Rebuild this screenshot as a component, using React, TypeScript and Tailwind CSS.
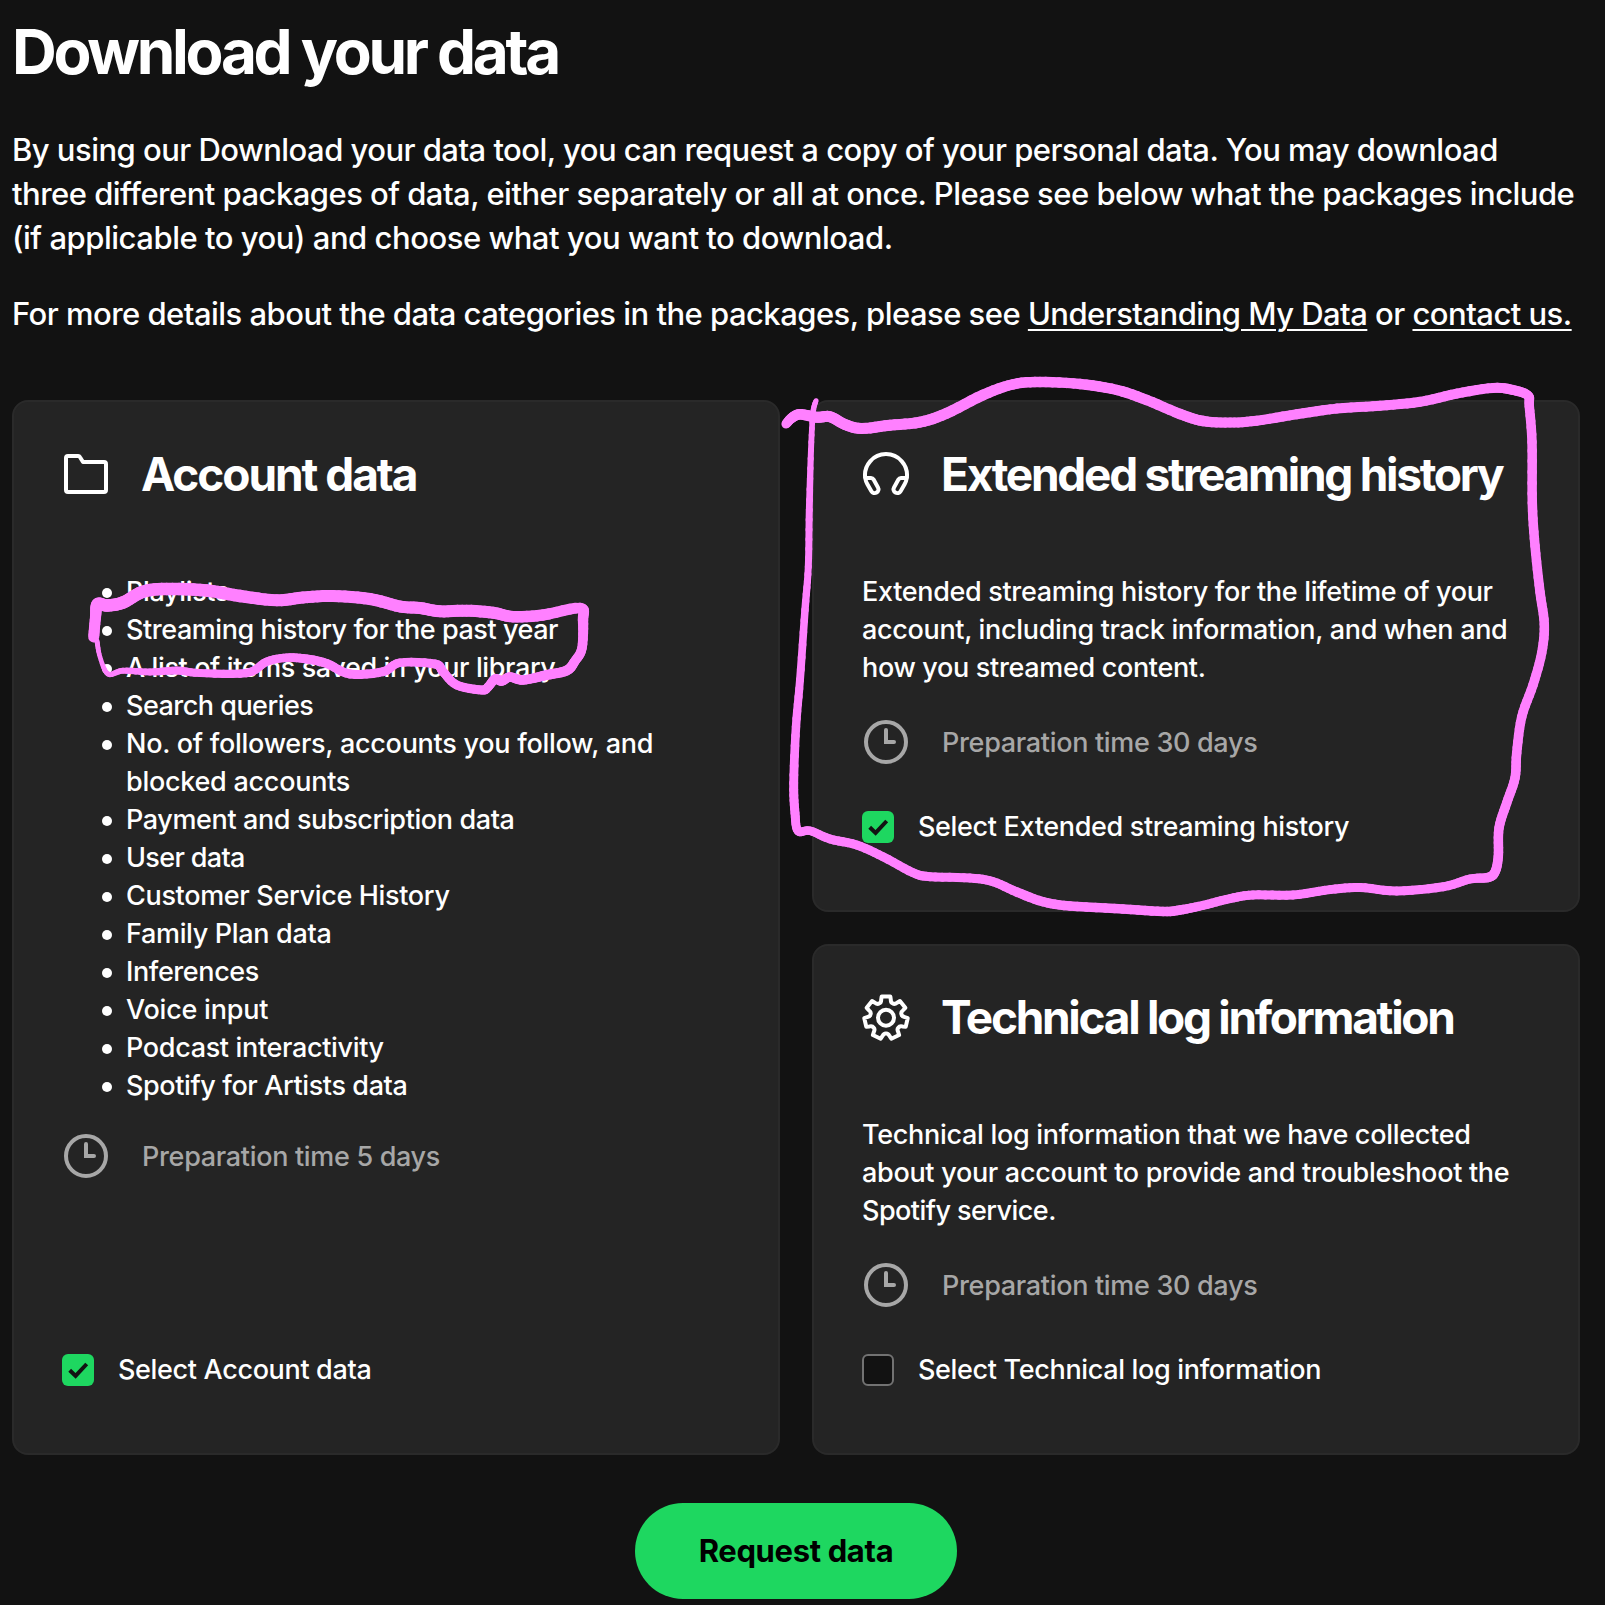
import type { ReactNode } from "react";

type Point = [number, number, number];

/* Freehand marker strokes: x, y, thickness */
const bigLoop: Point[] = [
  [786, 424, 9], [791.7, 418, 10], [800, 414.3, 10.5], [816.7, 417.3, 11], [830, 416.7, 11], [845, 424.5, 11], [861.7, 428.5, 11],
  [890, 425.2, 11], [920, 422.2, 11], [946.7, 413.3, 11], [983, 395, 11], [1013, 384.3, 10.5], [1040, 382, 10.5], [1080, 384, 10.5],
  [1117, 390, 10.5], [1146.7, 400, 10.5], [1180, 414, 10.5], [1203, 421, 10.5], [1230, 422.6, 10], [1256.7, 420.7, 10],
  [1296.7, 414.3, 10], [1336.7, 408.6, 10], [1380, 405.7, 10], [1420, 401.8, 10], [1456.7, 393.6, 10], [1493, 387.9, 10],
  [1513, 390, 10], [1528, 395.5, 9.5], [1529.3, 406.4, 9.5], [1532, 442, 9.5], [1532.3, 503, 9.5], [1535, 545.7, 9.5], [1540, 592, 9.5],
  [1544.3, 624.3, 9.5], [1541.7, 653, 9.5], [1533, 685, 9.5], [1521.7, 717, 9.5], [1516.7, 753, 9.5], [1515, 778, 9.5],
  [1506.7, 803, 9.5], [1499, 828, 9.5], [1498.3, 856.4, 9.5], [1495, 872, 9.5], [1488, 877.5, 9.5], [1470, 879, 9], [1443, 886.8, 9],
  [1396.7, 891, 9], [1360, 887.5, 9], [1330, 889.6, 9], [1293, 895, 9], [1253, 895, 9], [1230, 898.6, 9], [1203, 905.4, 9],
  [1180, 910, 9.5], [1163, 911.5, 9.5], [1123, 909, 9.5], [1070, 906, 9.5], [1043, 901.7, 9.5], [1016.7, 892, 9.5], [993, 881.7, 9],
  [970, 878, 9], [930, 876.7, 9], [913, 872.7, 9], [883, 856.7, 9], [856.7, 845, 9], [830, 839, 9], [810, 830.7, 8.5], [798, 831, 8.5],
  [795, 813, 9], [793.7, 783, 9], [796, 726.7, 8.5], [800, 680, 8], [805, 610, 7.5], [808.3, 566.7, 7], [809.3, 510, 7],
  [811, 450, 6], [813, 413, 5.5], [816, 400.7, 5],
];

const smallLoop: Point[] = [
  [93.7, 637, 11], [95.5, 617, 11], [97.5, 604, 12], [107, 605.5, 12.5], [123, 602.5, 12.5], [143, 591.7, 12.5], [166.7, 589, 12.5],
  [206.7, 590.5, 12.5], [240, 596, 12.5], [276.7, 600.3, 12], [303, 597.5, 12], [333, 596, 12], [370, 599, 12], [400, 606.5, 12],
  [420, 608, 12], [440, 611.3, 12], [466.7, 610.7, 12], [493, 612.7, 12], [513, 616.7, 11.5], [543, 615, 11.5], [580, 608, 10.5],
  [583, 620, 10.5], [582, 648, 9.5], [575, 661, 9.5], [566.7, 670.5, 10], [546.7, 675, 10], [523, 680, 9.5], [510, 677, 9.5],
  [501.7, 681, 9.5], [495, 679, 9.5], [488, 687, 9], [481.7, 690, 9], [456.7, 685, 9], [443, 671.7, 9], [435, 664, 9],
  [400, 662.7, 8.5], [383, 671.7, 9], [350, 674, 9], [326.7, 663.5, 9], [306.7, 659, 9], [286.7, 657.7, 8.5], [266.7, 661.7, 8.5],
  [246.7, 673, 8.5], [200, 673, 8], [176.7, 670.5, 8], [150, 672, 7], [123, 670.7, 6], [108, 674, 5], [100, 657, 4.5], [97, 641, 5],
];

function smooth(points: Point[], steps = 6): Point[] {
  const out: Point[] = [];
  for (let i = 0; i < points.length - 1; i++) {
    const p0 = points[Math.max(0, i - 1)];
    const p1 = points[i];
    const p2 = points[i + 1];
    const p3 = points[Math.min(points.length - 1, i + 2)];
    for (let s = 0; s < steps; s++) {
      const t = s / steps;
      const at = (k: 0 | 1) =>
        0.5 *
        (2 * p1[k] +
          (p2[k] - p0[k]) * t +
          (2 * p0[k] - 5 * p1[k] + 4 * p2[k] - p3[k]) * t * t +
          (3 * p1[k] - p0[k] - 3 * p2[k] + p3[k]) * t * t * t);
      out.push([at(0), at(1), p1[2] + (p2[2] - p1[2]) * t]);
    }
  }
  out.push(points[points.length - 1]);
  return out;
}

function Marker({ points }: { points: Point[] }) {
  const pts = smooth(points);
  return (
    <g stroke="#ff80ff" strokeLinecap="round">
      {pts.slice(1).map((p, i) => (
        <line key={i} x1={pts[i][0]} y1={pts[i][1]} x2={p[0]} y2={p[1]} strokeWidth={p[2]} />
      ))}
    </g>
  );
}

function Icon({ children, className = "" }: { children: ReactNode; className?: string }) {
  return (
    <svg viewBox="0 0 48 48" fill="none" stroke="currentColor" strokeWidth={4} strokeLinejoin="round" className={`size-12 shrink-0 ${className}`}>
      {children}
    </svg>
  );
}

const FolderIcon = () => (
  <Icon>
    <path d="M4 8a2 2 0 0 1 2-2h10.2a2 2 0 0 1 1.7 1L21 12h21a2 2 0 0 1 2 2v26a2 2 0 0 1-2 2H6a2 2 0 0 1-2-2z" />
  </Icon>
);

const HeadphonesIcon = () => {
  const cup = "M9 28H3.2C3.6 30.5 4.4 32.5 5.4 34.3L9.4 41.2a3.8 3.8 0 0 0 6.6-3.8L11.6 29.5A3 3 0 0 0 9 28z";
  return (
    <Icon>
      <path d="M3.2 28A21 21 0 1 1 44.8 28" />
      <path d={cup} />
      <path d={cup} transform="matrix(-1 0 0 1 48 0)" />
    </Icon>
  );
};

function gearPath() {
  const at = (r: number, deg: number) => {
    const a = ((deg - 90) * Math.PI) / 180;
    return `${(24 + r * Math.cos(a)).toFixed(2)} ${(24.7 + r * Math.sin(a)).toFixed(2)}`;
  };
  let d = "";
  for (let i = 0; i < 7; i++) {
    const c = (i * 360) / 7;
    d += `${i ? "L" : "M"}${at(21.7, c - 11.5)}L${at(21.7, c + 11.5)}L${at(18.6, c + 15)}Q${at(15.8, c + 17.5)} ${at(15.8, c + 25.7)}`;
    d += `Q${at(15.8, c + 33.9)} ${at(18.6, c + 36.4)}`;
  }
  return d + "Z";
}

const GearIcon = () => (
  <Icon>
    <path d={gearPath()} />
    <circle cx="24" cy="24.7" r="8" />
  </Icon>
);

const ClockIcon = () => (
  <Icon className="text-[#a7a7a7]">
    <circle cx="24" cy="24" r="20" />
    <path d="M24 12v12h8" strokeLinecap="round" strokeLinejoin="miter" />
  </Icon>
);

function Card({ icon, title, tracking, padding = "pt-12", children }: { icon: ReactNode; title: string; tracking: string; padding?: string; children: ReactNode }) {
  return (
    <section className={`flex flex-1 flex-col rounded-2xl border-2 border-[#2a2a2a] bg-[#242424] px-12 pb-[67px] ${padding}`}>
      <header className="mb-[75px] flex h-12 items-center gap-[31px]">
        {icon}
        <h2 className={`text-[46px] leading-[48px] font-bold whitespace-nowrap ${tracking}`}>{title}</h2>
      </header>
      {children}
    </section>
  );
}

function Preparation({ days, className }: { days: number; className: string }) {
  return (
    <div className={`flex h-12 items-center gap-8 text-[#a7a7a7] ${className}`}>
      <ClockIcon />
      <span className="pt-0.5 tracking-[-0.32px]">Preparation time {days} days</span>
    </div>
  );
}

function Option({ label, checked = false }: { label: string; checked?: boolean }) {
  return (
    <label className="mt-auto flex h-8 items-center gap-6">
      <span
        className={`flex size-8 shrink-0 rounded-md ${checked ? "bg-[#1ed760]" : "border-2 border-[#727272] bg-[#121212]"}`}
      >
        {checked && (
          <svg viewBox="0 0 32 32" className="size-8" fill="none" stroke="#121212" strokeWidth={4}>
            <path d="M7.7 16.2l5.9 5.7L24.7 10" />
          </svg>
        )}
      </span>
      <span className="tracking-[-0.34px]">{label}</span>
    </label>
  );
}

const accountItems: [string, string][] = [
  ["Playlists", "tracking-[-0.35px]"],
  ["Streaming history for the past year", "tracking-[-0.44px]"],
  ["A list of items saved in your library", "tracking-[-0.39px]"],
  ["Search queries", "tracking-[-0.52px]"],
  ["No. of followers, accounts you follow, and blocked accounts", "tracking-[-0.27px]"],
  ["Payment and subscription data", "tracking-[-0.39px]"],
  ["User data", "tracking-[-0.66px]"],
  ["Customer Service History", "tracking-[-0.33px]"],
  ["Family Plan data", "tracking-[-0.33px]"],
  ["Inferences", "tracking-[-0.41px]"],
  ["Voice input", "tracking-[-0.22px]"],
  ["Podcast interactivity", "tracking-[-0.34px]"],
  ["Spotify for Artists data", "tracking-[-0.39px]"],
];

export default function App() {
  return (
    <main className="relative h-[1605px] w-[1605px] overflow-hidden bg-[#121212] pt-5 pl-3 font-[Inter,sans-serif] font-[450] text-white">
      <div className="w-[1568px]">
        <h1 className="text-[62px] leading-[64px] font-bold tracking-[-3.3px]">Download your data</h1>

        <div className="mt-11 flex flex-col gap-8 text-[31px] leading-[44px] tracking-[-0.53px] whitespace-nowrap">
          <p>
            By using our Download your data tool, you can request a copy of your personal data. You may download
            <br />
            three different packages of data, either separately or all at once. Please see below what the packages include
            <br />
            <span className="tracking-[-0.47px]">(if applicable to you) and choose what you want to download.</span>
          </p>
          <p>
            For more details about the data categories in the packages, please see{" "}
            <a className="underline decoration-2 underline-offset-[4px]">Understanding My Data</a> or{" "}
            <a className="underline decoration-2 underline-offset-[4px]">contact us.</a>
          </p>
        </div>

        <div className="mt-16 grid h-[1055px] grid-cols-2 gap-8 text-[27px] leading-[38px]">
          <div className="flex">
            <Card icon={<FolderIcon />} title="Account data" tracking="tracking-[-2.05px]">
              <ul className="pl-10">
                {accountItems.map(([item, tracking]) => (
                  <li key={item} className="flex gap-[14px]">
                    <span className="mt-[14.5px] size-2.5 shrink-0 rounded-full bg-white" />
                    <span className={`w-[560px] ${tracking}`}>{item}</span>
                  </li>
                ))}
              </ul>
              <Preparation days={5} className="mt-[27px]" />
              <Option label="Select Account data" checked />
            </Card>
          </div>

          <div className="flex flex-col gap-8">
            <Card icon={<HeadphonesIcon />} title="Extended streaming history" tracking="tracking-[-2.27px]">
              <p className="tracking-[-0.33px] whitespace-nowrap">
                Extended streaming history for the lifetime of your
                <br />
                account, including track information, and when and
                <br />
                how you streamed content.
              </p>
              <Preparation days={30} className="mt-[31px]" />
              <Option label="Select Extended streaming history" checked />
            </Card>
            <Card icon={<GearIcon />} title="Technical log information" tracking="tracking-[-2.3px]" padding="pt-[47.5px]">
              <p className="tracking-[-0.3px] whitespace-nowrap">
                Technical log information that we have collected
                <br />
                about your account to provide and troubleshoot the
                <br />
                <span className="tracking-[-0.55px]">Spotify service.</span>
              </p>
              <Preparation days={30} className="mt-[31px]" />
              <Option label="Select Technical log information" />
            </Card>
          </div>
        </div>

        <div className="mt-12 flex justify-center">
          <button className="h-24 w-[322px] rounded-full bg-[#1ed760] text-[31px] font-bold tracking-[-0.35px] text-black">
            Request data
          </button>
        </div>
      </div>

      <svg viewBox="0 0 1605 1605" className="pointer-events-none absolute inset-0 size-full" fill="none">
        <Marker points={smallLoop} />
        <Marker points={bigLoop} />
      </svg>
    </main>
  );
}
